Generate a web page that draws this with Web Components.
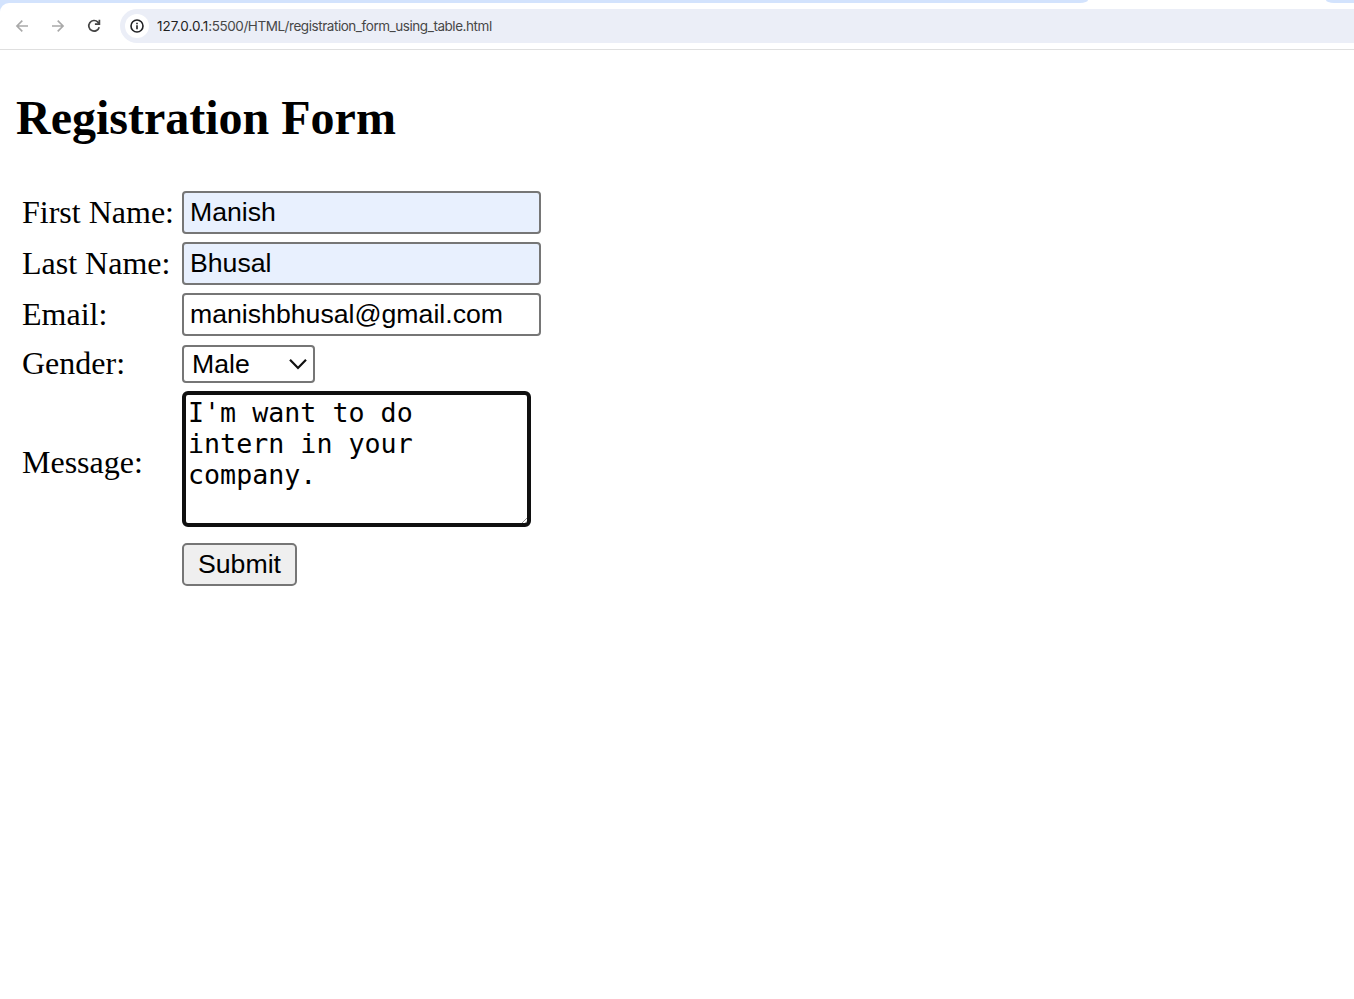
<!DOCTYPE html>
<html lang="en">
<head>
<meta charset="utf-8">
<title>Registration Form</title>
<style>
html, body { margin: 0; background: #fff; height: 100%; overflow: hidden; }
</style>
</head>
<body>
<browser-bar host="127.0.0.1" path=":5500/HTML/registration_form_using_table.html"></browser-bar>
<registration-form></registration-form>
<script>
class BaseElement extends HTMLElement {
  constructor() {
    super();
    this.attachShadow({ mode: 'open' });
  }
  connectedCallback() {
    this.shadowRoot.innerHTML = this.render();
  }
}

class BrowserBar extends BaseElement {
  render() {
    return `
    <style>
      :host { display: block; height: 50px; box-sizing: border-box; border-bottom: 1px solid #dfdfdf; background: #fff; }
      .strip { display: flex; height: 3px; background: #fff; overflow: hidden; }
      .left { width: 1088px; background: #d3e3fd; border-bottom-right-radius: 8px 3px; }
      .gap { width: 238px; }
      .right { flex: 1; background: #d3e3fd; border-bottom-left-radius: 8px 3px; }
      .wrap { background: linear-gradient(90deg, #d3e3fd 12px, #fff 12px); }
      .bar { display: flex; align-items: center; height: 46px; padding-left: 13px; background: #fff; border-top-left-radius: 9px; }
      svg { display: block; }
      .nav { display: flex; gap: 18px; width: 107px; }
      .pill { flex: 1; height: 34px; display: flex; align-items: center; gap: 8px; padding-left: 5px; background: #ebeef7; border-radius: 17px 0 0 17px; }
      .info { width: 24px; height: 24px; border-radius: 50%; background: #fff; display: grid; place-items: center; }
      .url { font: 13.5px/20px Inter, sans-serif; letter-spacing: -0.45px; color: #474747; white-space: nowrap; }
      b { font-weight: 400; color: #1f1f1f; letter-spacing: 0; }
    </style>
    <div class="strip"><div class="left"></div><div class="gap"></div><div class="right"></div></div>
    <div class="wrap"><div class="bar">
      <div class="nav">
        <svg width="18" height="18" fill="none" stroke="#a9a9a9" stroke-width="1.6"><path d="M15 9H4M9.3 3.6L3.9 9l5.4 5.4"/></svg>
        <svg width="18" height="18" fill="none" stroke="#a9a9a9" stroke-width="1.6"><path d="M3 9h11M8.7 3.6L14.1 9l-5.4 5.4"/></svg>
        <svg width="18" height="18" fill="none" stroke="#444" stroke-width="1.7"><path d="M14.2 10.2A5.3 5.3 0 1 1 12.9 5.1L14 6.5"/><path d="M14.4 2.8v4.4H9.9"/></svg>
      </div>
      <div class="pill">
        <div class="info"><svg width="14" height="14" fill="none" stroke="#202124" stroke-width="1.6"><circle cx="7" cy="7" r="6"/><path d="M7 6.3v3.9M7 3.7v1.5"/></svg></div>
        <div class="url"><b>${this.getAttribute('host')}</b>${this.getAttribute('path')}</div>
      </div>
    </div></div>`;
  }
}
customElements.define('browser-bar', BrowserBar);

class FormRow extends BaseElement {
  render() {
    return `
    <style>
      :host { display: grid; grid-template-columns: 160px auto; justify-content: start; align-items: center; }
      .label { font: 32px/37px "Liberation Serif", serif; color: #000; padding-top: var(--label-shift, 0px); padding-bottom: var(--label-lift, 0px); white-space: nowrap; }
    </style>
    <div class="label">${this.getAttribute('label') || ''}</div>
    <slot></slot>`;
  }
}
customElements.define('form-row', FormRow);

class TextField extends BaseElement {
  render() {
    return `
    <style>
      :host { display: block; box-sizing: border-box; width: 359px; height: 43px; border: 2px solid #767676; border-radius: 4px;
        padding: 4px 6px; background: #fff; font: 26.667px/31px "Liberation Sans", sans-serif; color: #000; white-space: nowrap; }
      :host([autofilled]) { background: #e8f0fe; }
    </style><slot></slot>`;
  }
}
customElements.define('text-field', TextField);

class SelectField extends BaseElement {
  render() {
    return `
    <style>
      :host { display: flex; align-items: center; justify-content: space-between; box-sizing: border-box; width: 133px; height: 38px;
        border: 2px solid #767676; border-radius: 4px; padding: 0 5px 0 8px; background: #fff; font: 26.667px/31px "Liberation Sans", sans-serif; color: #000; }
      svg { display: block; }
    </style><slot></slot>
    <svg width="20" height="14" fill="none" stroke="#101010" stroke-width="2.2"><path d="M2 2.8l8 8.2 8-8.2"/></svg>`;
  }
}
customElements.define('select-field', SelectField);

class MessageField extends BaseElement {
  render() {
    return `<style>
      :host { display: block; position: relative; box-sizing: border-box; width: 349px; height: 136px; border: 4px solid #101010; border-radius: 6px;
        padding: 2px; background: #fff; font: 26.667px/31px "DejaVu Sans Mono", monospace; color: #000; }
      .text { white-space: pre-line; }
      svg { position: absolute; right: 0; bottom: 0; }
    </style><div class="text"><slot></slot></div><svg width="6" height="6" stroke="#777" stroke-width=".8"><path d="M1 6L6 1M4.5 6L6 4.5"/></svg>`;
  }
}
customElements.define('message-field', MessageField);

class SubmitButton extends BaseElement {
  render() {
    return `
    <style>
      :host { display: block; box-sizing: border-box; width: 115px; height: 43px; border: 2px solid #767676; border-radius: 5px;
        background: #efefef; text-align: center; padding-top: 4px; font: 26.667px/31px "Liberation Sans", sans-serif; color: #000; }
    </style><slot></slot>`;
  }
}
customElements.define('submit-button', SubmitButton);

class RegistrationForm extends BaseElement {
  render() {
    return `
    <style>
      :host { display: block; padding: 40px 16px 0; }
      h1 { margin: 0 0 46px; font: bold 48px/55px "Liberation Serif", serif; color: #000; }
      .rows { display: flex; flex-direction: column; gap: 8px; padding-left: 6px; }
      .gender { margin-top: 1px; height: 38px; --label-lift: 1px; }
      .message { --label-shift: 7px; }
      message-field { white-space: pre-line; }
      .send { margin-top: 8px; }
    </style>
    <h1>Registration Form</h1>
    <div class="rows">
      <form-row label="First Name:"><text-field autofilled>Manish</text-field></form-row>
      <form-row label="Last Name:"><text-field autofilled>Bhusal</text-field></form-row>
      <form-row label="Email:"><text-field>manishbhusal@gmail.com</text-field></form-row>
      <form-row class="gender" label="Gender:"><select-field>Male</select-field></form-row>
      <form-row class="message" label="Message:"><message-field>I'm want to do
intern in your
company.</message-field></form-row>
      <form-row class="send"><submit-button>Submit</submit-button></form-row>
    </div>`;
  }
}
customElements.define('registration-form', RegistrationForm);
</script>
</body>
</html>
